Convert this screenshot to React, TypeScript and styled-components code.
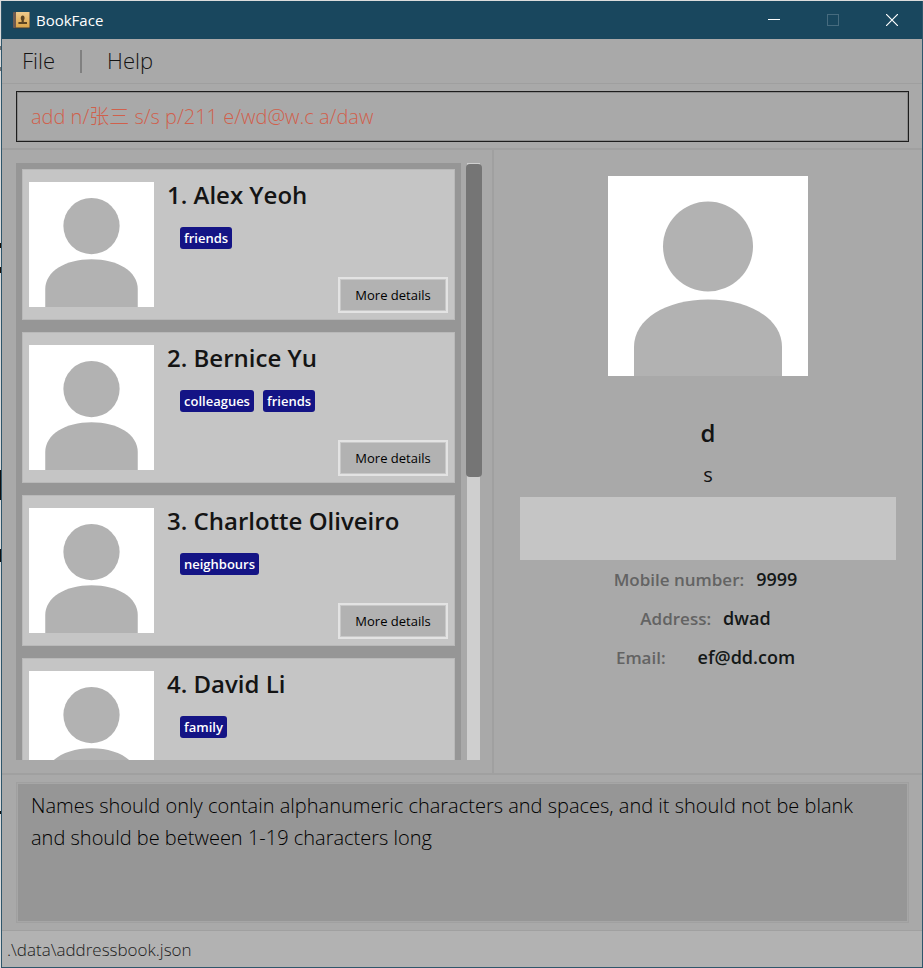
import React, { useState } from "react";
import styled, { createGlobalStyle } from "styled-components";

const light = `"Open Sans", "Noto Sans", "Noto Sans CJK SC", sans-serif`;

const GlobalStyle = createGlobalStyle`
  *, *::before, *::after { box-sizing: border-box; }
  html, body, #root { height: 100%; }
  body {
    margin: 0;
    background: #dcdcdc;
    color: #141414;
    font-family: ${light};
  }
  h1, h2, p, ul, dl, dd, dt { margin: 0; padding: 0; }
`;

const Desktop = styled.div`
  height: 100%;
  padding: 1px 0 0 1px;
  background:
    linear-gradient(#707070, #707070) 0 46px / 1px 4px no-repeat,
    linear-gradient(#707070, #707070) 0 67px / 1px 4px no-repeat,
    linear-gradient(#1c1008, #1c1008) 0 243px / 1px 5px no-repeat,
    linear-gradient(#1c1008, #1c1008) 0 267px / 1px 6px no-repeat,
    linear-gradient(#101010, #101010) 0 470px / 1px 30px no-repeat,
    linear-gradient(#101010, #101010) 0 549px / 1px 13px no-repeat,
    linear-gradient(#101010, #101010) 0 811px / 1px 3px no-repeat,
    #dcdcdc;
`;

const Window = styled.div`
  height: 100%;
  display: flex;
  flex-direction: column;
  background: #a9a9a9;
  border: 1px solid #2f566b;
  border-top: 0;
`;

const TitleBar = styled.header`
  flex: none;
  height: 38px;
  display: flex;
  align-items: center;
  padding-right: 1px;
  background: #19475e;
  color: #fff;
`;

const AppIcon = styled.svg`
  width: 18px;
  height: 18px;
  margin: 0 6px 0 10px;
`;

const AppTitle = styled.h1`
  flex: 1;
  font-size: 15px;
  line-height: 20px;
  font-weight: 400;
`;

const CaptionButton = styled.button`
  width: 59px;
  height: 38px;
  padding: 0;
  border: 0;
  display: flex;
  align-items: center;
  justify-content: center;
  background: transparent;
  color: #fff;
  &:disabled { color: #466b7e; }
`;

const MenuBar = styled.nav`
  flex: none;
  height: 45px;
  display: flex;
  align-items: center;
  padding: 0 0 2px 20px;
  gap: 25px;
  border-bottom: 1px solid #9f9f9f;
`;

const MenuButton = styled.button`
  padding: 0;
  border: 0;
  background: transparent;
  font: 300 22px/30px ${light};
  color: #141414;
`;

const MenuDivider = styled.span`
  width: 2px;
  height: 23px;
  margin-top: 3px;
  background: #808080;
`;

const CommandArea = styled.form`
  flex: none;
  padding: 7px 13px 6px 14px;
  border-bottom: 2px solid #a0a0a0;
`;

const CommandInput = styled.input`
  display: block;
  width: 100%;
  height: 51px;
  padding: 0 14px 3px;
  border: 1px solid #1d1d1d;
  border-radius: 0;
  box-shadow: inset 0 0 0 1px #8c8c8c;
  background: transparent;
  color: #d0604c;
  font: 300 20px/30px ${light};
  outline: none;
`;

const Split = styled.main`
  flex: 1;
  min-height: 0;
  display: grid;
  grid-template-columns: minmax(0, 490fr) 2px minmax(0, 428fr);
  grid-template-rows: minmax(0, 1fr);
`;

const SplitHandle = styled.div`
  background: #a0a0a0;
`;

const ListPane = styled.section`
  display: flex;
  gap: 5px;
  padding: 13px 9px 13px 14px;
  min-height: 0;
`;

const CardList = styled.ul`
  flex: 1;
  min-width: 0;
  list-style: none;
  overflow: hidden;
  display: flex;
  flex-direction: column;
  gap: 12px;
  padding: 6px;
  background: #969696;
`;

const Card = styled.li`
  flex: none;
  display: flex;
  gap: 13px;
  padding: 12px 6px 6px;
  border: 1px solid #b9b9b9;
  background: #c5c5c5;
`;

const AvatarSvg = styled.svg<{ $size: number }>`
  flex: none;
  display: block;
  width: ${(p) => p.$size}px;
  height: ${(p) => p.$size}px;
  background: #fff;
`;

const CardBody = styled.div`
  flex: 1;
  min-width: 0;
  display: flex;
  flex-direction: column;
  height: 131px;
`;

const CardName = styled.h2`
  font-size: 24px;
  line-height: 26px;
  font-weight: 600;
  white-space: nowrap;
`;

const Tags = styled.div`
  display: flex;
  gap: 9px;
  padding: 19px 0 0 13px;
`;

const Tag = styled.span`
  padding: 0 4px;
  border-radius: 3px;
  background: #141485;
  color: #fff;
  font-size: 13px;
  line-height: 22px;
  font-weight: 600;
`;

const DetailsButton = styled.button`
  margin-top: auto;
  align-self: flex-end;
  width: 110px;
  height: 36px;
  padding: 0;
  border: 2px solid #e3e3e3;
  box-shadow: inset 0 0 0 1px #c8c8c8;
  background: #b2b2b2;
  color: #000;
  font: 400 13px/18px ${light};
`;

const ScrollTrack = styled.div`
  flex: none;
  width: 17px;
  padding: 1px 1px 0 0;
  background: linear-gradient(#cfcfcf, #cfcfcf) 1px 0 / 13px 100% no-repeat;
`;

const ScrollThumb = styled.div`
  height: 313px;
  border-radius: 4px;
  background: #757575;
`;

const DetailPane = styled.section`
  display: flex;
  flex-direction: column;
  align-items: center;
  padding: 26px 26px 0;
  min-height: 0;
  overflow: hidden;
`;

const DetailName = styled.h2`
  margin-top: 40px;
  font-size: 24px;
  line-height: 34px;
  font-weight: 600;
`;

const DetailStatus = styled.p`
  margin-top: 8px;
  font-size: 20px;
  line-height: 34px;
`;

const DetailTags = styled.div`
  align-self: stretch;
  height: 63px;
  margin-top: 5px;
  background: #c5c5c5;
`;

const Fields = styled.dl`
  display: flex;
  flex-direction: column;
  align-items: center;
  padding-right: 5px;
`;

const Field = styled.div<{ $gap: number }>`
  display: flex;
  align-items: baseline;
  gap: ${(p) => p.$gap}px;
  height: 39px;
  font-size: 18px;
  line-height: 39px;
  font-weight: 600;
`;

const FieldLabel = styled.dt`
  font-size: 17px;
  color: #636363;
`;

const FieldValue = styled.dd`
  color: #141818;
`;

const ResultArea = styled.section`
  flex: none;
  padding: 7px 13px 7px 14px;
  border-top: 2px solid #a0a0a0;
  border-bottom: 1px solid #a0a0a0;
`;

const ResultText = styled.textarea`
  display: block;
  width: 100%;
  height: 141px;
  padding: 7px 36px 7px 14px;
  border: 1px solid #a0a0a0;
  border-radius: 0;
  box-shadow: inset 0 0 0 1px #a6a6a6;
  background: #969696;
  color: #000;
  font: 300 20px/32px ${light};
  resize: none;
  outline: none;
`;

const StatusBar = styled.footer`
  flex: none;
  height: 36px;
  padding-left: 5px;
  background: #b2b2b2;
  color: #202020;
  font-size: 17px;
  line-height: 37px;
  font-weight: 300;
`;

const Avatar = ({ size }: { size: number }) => (
  <AvatarSvg $size={size} viewBox="0 0 200 200" role="img" aria-label="Profile photo">
    <circle cx="100" cy="70.500" r="45" fill="#b2b2b2" />
    <path d="M26 200V171C26 143 58 123.500 100 123.500S174 143 174 171V200Z" fill="#b2b2b2" />
  </AvatarSvg>
);

const people = [
  { name: "Alex Yeoh", tags: ["friends"] },
  { name: "Bernice Yu", tags: ["colleagues", "friends"] },
  { name: "Charlotte Oliveiro", tags: ["neighbours"] },
  { name: "David Li", tags: ["family"] },
];

const fields = [
  { label: "Mobile number:", value: "9999", gap: 12 },
  { label: "Address:", value: "dwad", gap: 12 },
  { label: "Email:", value: "ef@dd.com", gap: 32 },
];

export default function App() {
  const [command, setCommand] = useState("add n/张三 s/s p/211 e/wd@w.c a/daw");
  return (
    <Desktop>
      <GlobalStyle />
      <Window>
        <TitleBar>
          <AppIcon viewBox="0 0 18 18" aria-hidden="true">
            <defs>
              <linearGradient id="cover" x1="0" y1="0" x2="0" y2="1">
                <stop offset="0" stopColor="#ecc98c" />
                <stop offset="1" stopColor="#dba548" />
              </linearGradient>
            </defs>
            <rect x="1" y="1" width="17" height="16.500" rx="1" fill="#3c3a38" />
            <rect x="1" y="1" width="3" height="16" rx="1" fill="#6f5b50" />
            <rect x="4" y="1" width="13.500" height="15.500" fill="url(#cover)" />
            <path d="M9.600 9.500C8.300 8 8.500 4.500 10.700 4.500s2.400 3.500 1.100 5v1.500h3.200v2H6.400v-2h3.200Z" fill="#5b4423" />
          </AppIcon>
          <AppTitle>BookFace</AppTitle>
          <CaptionButton type="button" aria-label="Minimize">
            <svg width="12" height="12" viewBox="0 0 12 12" shapeRendering="crispEdges"><path d="M0 5.500H12" stroke="currentColor" /></svg>
          </CaptionButton>
          <CaptionButton type="button" aria-label="Maximize" disabled>
            <svg width="12" height="12" viewBox="0 0 12 12" shapeRendering="crispEdges"><path d="M.5.5h11v11H.5Z" fill="none" stroke="currentColor" /></svg>
          </CaptionButton>
          <CaptionButton type="button" aria-label="Close">
            <svg width="12" height="12" viewBox="0 0 12 12"><path d="M0 0 12 12M12 0 0 12" stroke="currentColor" strokeWidth="1.200" /></svg>
          </CaptionButton>
        </TitleBar>
        <MenuBar>
          <MenuButton type="button">File</MenuButton>
          <MenuDivider />
          <MenuButton type="button">Help</MenuButton>
        </MenuBar>
        <CommandArea onSubmit={(e) => e.preventDefault()}>
          <CommandInput
            aria-label="Command"
            value={command}
            spellCheck={false}
            onChange={(e) => setCommand(e.target.value)}
          />
        </CommandArea>
        <Split>
          <ListPane>
            <CardList>
              {people.map((p, i) => (
                <Card key={p.name}>
                  <Avatar size={125} />
                  <CardBody>
                    <CardName>{`${i + 1}. ${p.name}`}</CardName>
                    <Tags>
                      {p.tags.map((t) => (
                        <Tag key={t}>{t}</Tag>
                      ))}
                    </Tags>
                    <DetailsButton type="button">More details</DetailsButton>
                  </CardBody>
                </Card>
              ))}
            </CardList>
            <ScrollTrack>
              <ScrollThumb />
            </ScrollTrack>
          </ListPane>
          <SplitHandle />
          <DetailPane>
            <Avatar size={200} />
            <DetailName>d</DetailName>
            <DetailStatus>s</DetailStatus>
            <DetailTags />
            <Fields>
              {fields.map((f) => (
                <Field key={f.label} $gap={f.gap}>
                  <FieldLabel>{f.label}</FieldLabel>
                  <FieldValue>{f.value}</FieldValue>
                </Field>
              ))}
            </Fields>
          </DetailPane>
        </Split>
        <ResultArea>
          <ResultText
            aria-label="Result"
            readOnly
            spellCheck={false}
            value="Names should only contain alphanumeric characters and spaces, and it should not be blank and should be between 1-19 characters long"
          />
        </ResultArea>
        <StatusBar>.\data\addressbook.json</StatusBar>
      </Window>
    </Desktop>
  );
}
